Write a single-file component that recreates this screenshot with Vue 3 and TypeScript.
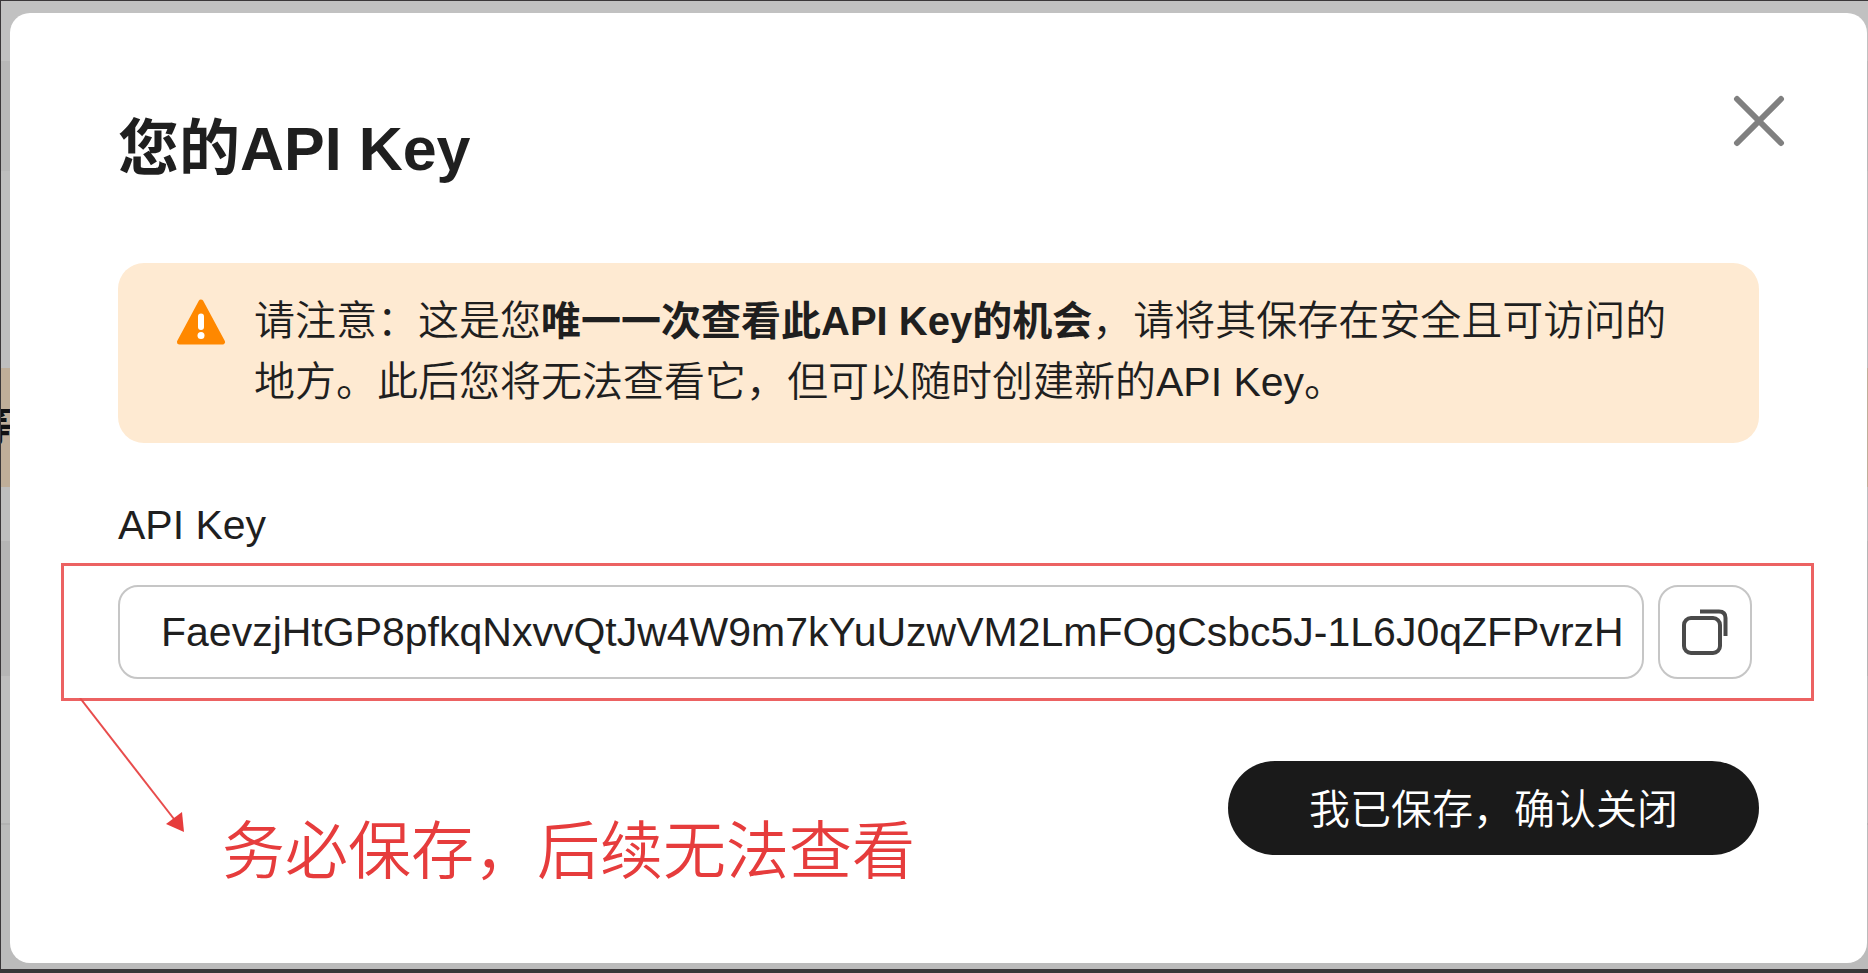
<script setup lang="ts">
import { ref } from 'vue'

const apiKey = ref('FaevzjHtGP8pfkqNxvvQtJw4W9m7kYuUzwVM2LmFOgCsbc5J-1L6J0qZFPvrzH')
const open = ref(true)

function copyKey(): void {
  void navigator.clipboard?.writeText(apiKey.value)
}

function close(): void {
  open.value = false
}
</script>

<template>
  <div class="page">
    <div class="backdrop" aria-hidden="true">
      <div class="row row-a"></div>
      <div class="row row-b"></div>
      <div class="row row-c"></div>
      <div class="row notice">等</div>
      <div class="row row-b"></div>
      <div class="row row-d"></div>
      <div class="row row-e"></div>
      <div class="row row-f"></div>
    </div>

    <section v-if="open" class="dialog" role="dialog" aria-labelledby="dialog-title">
      <header class="head">
        <h1 id="dialog-title">您的API Key</h1>
        <button class="close" type="button" aria-label="关闭" @click="close">
          <svg viewBox="0 0 52 52" fill="none" stroke="#808080" stroke-width="6" stroke-linecap="round">
            <path d="M4 4 48 48M48 4 4 48" />
          </svg>
        </button>
      </header>

      <div class="alert" role="alert">
        <svg class="warn" viewBox="0 0 50 46" aria-hidden="true">
          <path d="M25 3 46.500 43H3.500Z" fill="#ff8800" stroke="#ff8800" stroke-width="5" stroke-linejoin="round" />
          <path d="M25 17.500V28" stroke="#fff" stroke-width="6" stroke-linecap="round" />
          <circle cx="25" cy="36.500" r="3.500" fill="#fff" />
        </svg>
        <p>
          请注意：这是您<strong>唯一一次查看此API Key的机会</strong>，请将其保存在安全且可访问的地方。此后您将无法查看它，但可以随时创建新的API Key。
        </p>
      </div>

      <label class="label" for="api-key">API Key</label>
      <div class="marked">
        <input id="api-key" type="text" readonly :value="apiKey" />
        <button class="copy" type="button" aria-label="复制" @click="copyKey">
          <svg viewBox="0 0 46 46" fill="none" stroke="#4a4a4a" stroke-width="4">
            <rect x="2" y="9" width="36" height="35" rx="7" />
            <path d="M18 2.500H37Q43.500 2.500 43.500 9V27" />
          </svg>
        </button>
        <svg class="arrow" viewBox="0 0 110 140" aria-hidden="true">
          <path d="M2 0 96 121" stroke="#e84c4c" stroke-width="2" />
          <path d="M106 134 88 126 104 114Z" fill="#e63c3c" />
        </svg>
      </div>

      <footer class="foot">
        <p class="note">务必保存，后续无法查看</p>
        <button class="confirm" type="button" @click="close">我已保存，确认关闭</button>
      </footer>
    </section>
  </div>
</template>

<style>
body {
  margin: 0;
}
</style>

<style scoped>
.page {
  box-sizing: border-box;
  position: relative;
  min-height: 100vh;
  padding: 12px 1px 6px 9px;
  border: solid #3a3739;
  border-width: 1px 0 4px 1px;
  background: #bbb;
  color: #1f1f1f;
  font-family: "Liberation Sans", "Noto Sans CJK SC", sans-serif;
  display: flex;
}

.backdrop {
  position: absolute;
  inset: 0;
  display: flex;
  flex-direction: column;
  overflow: hidden;
}

.row-a { flex: 60; background: #c1c1c1; }
.row-b { flex: 110; background: #b8b8b8; }
.row-c { flex: 197; background: #bebebe; }
.notice {
  flex: 119;
  background: #bfae99;
  color: #111;
  font-size: 41px;
  line-height: 119px;
  font-weight: 700;
  text-indent: -30px;
}
.notice + .row-b { flex: 54; background: #bebebe; }
.row-d { flex: 135; background: #b5b5b5; }
.row-e { flex: 147; background: #bebebe; border-bottom: 2px solid #b2b2b2; }
.row-f { flex: 144; background: #bbb; }

.dialog {
  position: relative;
  box-sizing: border-box;
  flex: 1;
  padding: 72px 108px 0;
  border-radius: 20px;
  background: #fff;
}

.head {
  display: flex;
  justify-content: space-between;
  align-items: flex-start;
}

h1 {
  margin: 19px 0 0;
  font-size: 61px;
  line-height: 90px;
  font-weight: 700;
}

button {
  font-family: inherit;
  cursor: pointer;
}

.close {
  margin: 10px -26px 0 0;
  padding: 0;
  border: 0;
  background: none;
}

.close svg {
  display: block;
  width: 52px;
  height: 52px;
}

.alert {
  display: flex;
  gap: 28px;
  margin-top: 69px;
  padding: 28px 60px 30px 58px;
  border-radius: 26px;
  background: #feead2;
}

.warn {
  flex: none;
  width: 50px;
  height: 46px;
  margin-top: 8px;
}

p {
  margin: 0;
}

.alert p {
  flex: 1;
  font-size: 41px;
  line-height: 61px;
  font-weight: 350;
}

strong {
  font-size: 40px;
  font-weight: 700;
}

.label {
  display: block;
  width: max-content;
  margin-top: 52px;
  font-size: 41px;
  line-height: 60px;
}

.marked {
  position: relative;
  display: flex;
  gap: 14px;
  margin: 8px -55px 0 -57px;
  padding: 19px 59px 19px 54px;
  border: 3px solid #ec6262;
}

input {
  box-sizing: border-box;
  flex: 1;
  min-width: 0;
  height: 94px;
  padding: 0 20px 0 41px;
  border: 2px solid #c6c6c6;
  border-radius: 20px;
  background: #fff;
  color: #1f1f1f;
  font: 400 41px "Liberation Sans", sans-serif;
  outline: none;
}

.copy {
  display: grid;
  place-items: center;
  width: 94px;
  height: 94px;
  padding: 0;
  border: 2px solid #c6c6c6;
  border-radius: 20px;
  background: #fff;
}

.copy svg {
  width: 46px;
  height: 46px;
}

.arrow {
  position: absolute;
  left: 14px;
  top: 100%;
  width: 110px;
  height: 140px;
}

.foot {
  display: flex;
  justify-content: space-between;
  align-items: flex-start;
  margin-top: 60px;
}

.note {
  margin: 42px 0 0 104px;
  color: #e63c3c;
  font-size: 63px;
  line-height: 96px;
  font-weight: 350;
}

.confirm {
  height: 94px;
  padding: 0 81px 4px;
  border: 0;
  border-radius: 47px;
  background: #1a1a1a;
  color: #fff;
  font-size: 41px;
  font-weight: 350;
}
</style>
